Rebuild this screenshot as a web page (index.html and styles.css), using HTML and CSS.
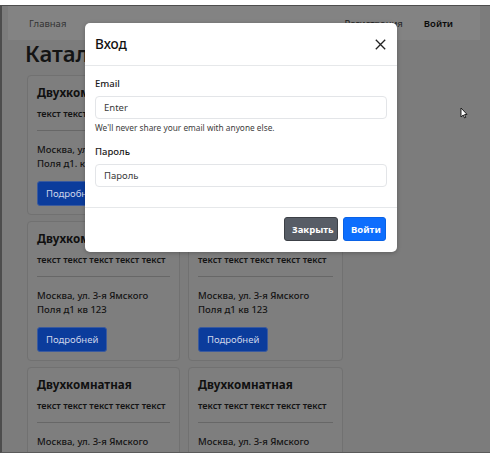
FILE: index.html
```html
<!DOCTYPE html>
<html lang="ru">
<head>
<meta charset="utf-8">
<title>Каталог</title>
<link rel="stylesheet" href="styles.css">
</head>
<body>
<div class="window">
  <nav class="navbar">
    <a class="nav-link">Главная</a>
    <div class="nav-right">
      <a class="nav-link dark">Регистрация</a>
      <a class="nav-link strong">Войти</a>
    </div>
  </nav>
  <main class="main">
    <h1 class="page-title">Каталог</h1>
    <div class="grid">
      <div class="card">
        <h5 class="card-title">Двухкомнатная</h5>
        <p class="card-text">текст текст текст текст текст</p>
        <hr class="card-hr">
        <p class="card-addr">Москва, ул. 3-я Ямского<br>Поля д1. кв 123</p>
        <button class="btn-more">Подробней</button>
      </div>
      <div class="card">
        <h5 class="card-title">Двухкомнатная</h5>
        <p class="card-text">текст текст текст текст текст</p>
        <hr class="card-hr">
        <p class="card-addr">Москва, ул. 3-я Ямского<br>Поля д1 кв 123</p>
        <button class="btn-more">Подробней</button>
      </div>
      <div class="card">
        <h5 class="card-title">Двухкомнатная</h5>
        <p class="card-text">текст текст текст текст текст</p>
        <hr class="card-hr">
        <p class="card-addr">Москва, ул. 3-я Ямского<br>Поля д1 кв 123</p>
        <button class="btn-more">Подробней</button>
      </div>
      <div class="card">
        <h5 class="card-title">Двухкомнатная</h5>
        <p class="card-text">текст текст текст текст текст</p>
        <hr class="card-hr">
        <p class="card-addr">Москва, ул. 3-я Ямского<br>Поля д1 кв 123</p>
        <button class="btn-more">Подробней</button>
      </div>
      <div class="card">
        <h5 class="card-title">Двухкомнатная</h5>
        <p class="card-text">текст текст текст текст текст</p>
        <hr class="card-hr">
        <p class="card-addr">Москва, ул. 3-я Ямского<br>Поля д1 кв 123</p>
        <button class="btn-more">Подробней</button>
      </div>
      <div class="card">
        <h5 class="card-title">Двухкомнатная</h5>
        <p class="card-text">текст текст текст текст текст</p>
        <hr class="card-hr">
        <p class="card-addr">Москва, ул. 3-я Ямского<br>Поля д1 кв 123</p>
        <button class="btn-more">Подробней</button>
      </div>
    </div>
  </main>

  <div class="modal">
    <div class="modal-header">
      <h5 class="modal-title">Вход</h5>
      <button class="btn-close" aria-label="Закрыть">
        <svg width="11" height="11" viewBox="0 0 11 11"><path d="M0.8 0.8 L10.2 10.2 M10.2 0.8 L0.8 10.2" stroke="#222" stroke-width="1.3" fill="none"/></svg>
      </button>
    </div>
    <div class="modal-body">
      <label class="form-label">Email</label>
      <div class="form-control">Enter</div>
      <div class="form-text">We'll never share your email with anyone else.</div>
      <label class="form-label second">Пароль</label>
      <div class="form-control">Пароль</div>
    </div>
    <div class="modal-footer">
      <button class="btn btn-secondary">Закрыть</button>
      <button class="btn btn-primary">Войти</button>
    </div>
  </div>

  <svg class="cursor" width="8" height="12" viewBox="0 0 8 12"><path d="M1 1 L1 10 L3.2 8 L4.6 11 L5.8 10.4 L4.5 7.6 L7 7.4 Z" fill="#fff" stroke="#111" stroke-width="0.9" stroke-linejoin="round"/></svg>
</div>
</body>
</html>
```

FILE: styles.css
```css
* { box-sizing: border-box; }

html, body {
  margin: 0;
  padding: 0;
}

body {
  background: #ffffff;
  height: 456px;
  overflow: hidden;
  font-family: "Noto Sans", "Open Sans", sans-serif;
  color: #111;
}

.window {
  position: relative;
  margin-top: 5px;
  height: 448px;
  border-top: 1px solid #4d4d4d;
  border-left: 2px solid #4d4d4d;
  border-bottom: 1px solid #5a5a5a;
  background: #7c7c7c;
  overflow: hidden;
}

.navbar {
  margin: 0 10px 0 6px;
  height: 34px;
  background: #838383;
  display: flex;
  align-items: center;
  justify-content: space-between;
  padding: 0 27px 0 21px;
  font-size: 9.5px;
}

.nav-link {
  color: #333;
}

.nav-right {
  display: flex;
  gap: 21px;
  align-items: center;
}

.nav-link.dark { color: #222; }
.nav-link.strong { color: #0a0a0a; font-weight: 600; }

.main {
  padding: 0 0 0 23px;
}

.page-title {
  margin: 0 0 9px 0;
  font-size: 22px;
  line-height: 26px;
  font-weight: 600;
  color: #141414;
}

.grid {
  margin-left: 2px;
  display: grid;
  grid-template-columns: 153px 155px;
  column-gap: 8px;
  row-gap: 6px;
}

.card {
  height: 140px;
  border: 1px solid #717171;
  border-radius: 4px;
  background: #7e7e7e;
  padding: 9px 9px 10px 9px;
}

.card-title {
  margin: 0;
  font-size: 11.6px;
  line-height: 16px;
  font-weight: 700;
  color: #101010;
}

.card-text {
  margin: 6px 0 0 0;
  font-size: 9.1px;
  line-height: 13px;
  font-weight: 600;
  color: #141414;
}

.card-hr {
  margin: 10px 0 0 0;
  border: 0;
  border-top: 1px solid #676767;
}

.card-addr {
  margin: 12px 0 0 0;
  font-size: 9.5px;
  line-height: 14px;
  font-weight: 500;
  color: #141414;
}

.btn-more {
  display: block;
  margin-top: 10px;
  height: 25px;
  padding: 0 8px;
  border: 1px solid #3a5a9e;
  border-radius: 3px;
  background: #0b3c9c;
  color: #cdd5ea;
  font-family: inherit;
  font-size: 9.5px;
}

.modal {
  position: absolute;
  left: 83px;
  top: 17px;
  width: 312px;
  background: #fff;
  border-radius: 5px;
  box-shadow: 0 1px 4px rgba(0,0,0,0.25);
}

.modal-header {
  height: 43px;
  padding: 0 11px 0 10px;
  display: flex;
  align-items: center;
  justify-content: space-between;
  border-bottom: 1px solid #e6e8ea;
}

.modal-title {
  margin: 0;
  font-size: 13.5px;
  font-weight: 500;
  color: #111;
}

.btn-close {
  background: none;
  border: 0;
  padding: 0;
  width: 11px;
  height: 11px;
  display: flex;
}

.modal-body {
  padding: 11px 10px 20px 10px;
  display: flex;
  flex-direction: column;
}

.form-label {
  font-size: 9.5px;
  line-height: 14px;
  font-weight: 500;
  color: #1a1a1a;
  margin-bottom: 5px;
}

.form-label.second { margin-top: 11px; margin-bottom: 5px; }

.form-control {
  height: 23px;
  border: 1px solid #e3e5e8;
  border-radius: 4px;
  padding: 0 8px;
  display: flex;
  align-items: center;
  font-size: 9.5px;
  color: #3a3a3a;
}

.form-text {
  margin-top: 3px;
  font-size: 8.3px;
  line-height: 12px;
  color: #3d3d3d;
}

.modal-footer {
  border-top: 1px solid #e6e8ea;
  padding: 9px 11px 11px 10px;
  display: flex;
  justify-content: flex-end;
  gap: 5px;
}

.btn {
  height: 24px;
  border-radius: 3px;
  font-family: inherit;
  font-size: 9.5px;
  font-weight: 700;
  color: #fff;
  padding: 0 7px;
}

.btn-secondary {
  width: 54px;
  background: #575d66;
  border: 1px solid #3c4046;
}

.btn-primary {
  width: 43px;
  background: #0d6efd;
  border: 1px solid #0a62e6;
}

.cursor {
  position: absolute;
  left: 458px;
  top: 101px;
}
```
